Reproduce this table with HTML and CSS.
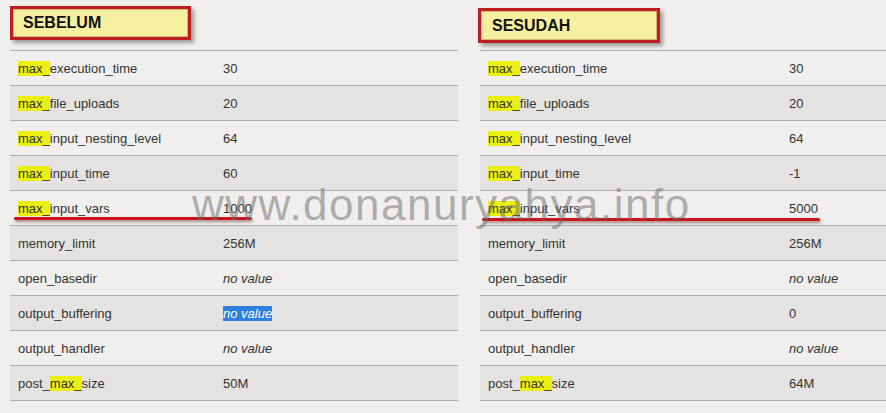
FILE: index.html
```html
<!DOCTYPE html>
<html>
<head>
<meta charset="utf-8">
<link rel="stylesheet" href="styles.css">
</head>
<body>
<div class="page">
  <section class="panel panel-left">
    <div class="head head-left"><div class="label label-left">SEBELUM</div></div>
    <div class="table">
      <div class="row"><span class="k"><span class="hl">max_</span>execution_time</span><span class="v">30</span></div>
      <div class="row alt"><span class="k"><span class="hl">max_</span>file_uploads</span><span class="v">20</span></div>
      <div class="row"><span class="k"><span class="hl">max_</span>input_nesting_level</span><span class="v">64</span></div>
      <div class="row alt"><span class="k"><span class="hl">max_</span>input_time</span><span class="v">60</span></div>
      <div class="row"><span class="k"><span class="hl">max_</span>input_vars</span><span class="v">1000</span><span class="mark mark-left"></span></div>
      <div class="row alt"><span class="k">memory_limit</span><span class="v">256M</span></div>
      <div class="row"><span class="k">open_basedir</span><span class="v"><i>no value</i></span></div>
      <div class="row alt"><span class="k">output_buffering</span><span class="v"><i class="sel">no value</i></span></div>
      <div class="row"><span class="k">output_handler</span><span class="v"><i>no value</i></span></div>
      <div class="row alt last"><span class="k">post_<span class="hl">max_</span>size</span><span class="v">50M</span></div>
    </div>
  </section>
  <section class="panel panel-right">
    <div class="head head-right"><div class="label label-right">SESUDAH</div></div>
    <div class="table">
      <div class="row"><span class="k"><span class="hl">max_</span>execution_time</span><span class="v">30</span></div>
      <div class="row alt"><span class="k"><span class="hl">max_</span>file_uploads</span><span class="v">20</span></div>
      <div class="row"><span class="k"><span class="hl">max_</span>input_nesting_level</span><span class="v">64</span></div>
      <div class="row alt"><span class="k"><span class="hl">max_</span>input_time</span><span class="v">-1</span></div>
      <div class="row"><span class="k"><span class="hl">max_</span>input_vars</span><span class="v">5000</span><span class="mark mark-right"></span></div>
      <div class="row alt"><span class="k">memory_limit</span><span class="v">256M</span></div>
      <div class="row"><span class="k">open_basedir</span><span class="v"><i>no value</i></span></div>
      <div class="row alt"><span class="k">output_buffering</span><span class="v">0</span></div>
      <div class="row"><span class="k">output_handler</span><span class="v"><i>no value</i></span></div>
      <div class="row alt last"><span class="k">post_<span class="hl">max_</span>size</span><span class="v">64M</span></div>
    </div>
  </section>
  <div class="watermark">www.donanuryahya.info</div>
</div>
</body>
</html>
```

FILE: styles.css
```css
html, body {
  margin: 0;
  padding: 0;
  background: #f0efee;
}
body {
  font-family: "Liberation Sans", Arial, sans-serif;
  color: #333;
  overflow: hidden;
}
.page {
  position: relative;
  display: flex;
  gap: 22px;
  padding-left: 10px;
  width: 886px;
  height: 413px;
  box-sizing: border-box;
}
.panel-left { width: 448px; flex: none; }
.panel-right { width: 410px; flex: none; }
.head {
  height: 50px;
  box-sizing: border-box;
}
.head-left { padding-top: 6px; }
.head-right { padding-top: 8px; }
.label {
  box-sizing: border-box;
  height: 34px;
  border: 3px solid #be1d24;
  background: #f5f0a0;
  color: #111;
  font-weight: bold;
  font-size: 16px;
  display: flex;
  align-items: center;
  box-shadow: 3px 3px 4px rgba(0,0,0,0.35), inset 0 0 0 1px rgba(120,0,0,0.25);
}
.label-left {
  width: 181px;
  padding-left: 10px;
}
.label-right {
  width: 182px;
  height: 35px;
  margin-left: -2px;
  padding-left: 11px;
}
.row {
  position: relative;
  display: grid;
  height: 35px;
  box-sizing: border-box;
  align-items: center;
  padding-left: 8px;
  padding-top: 1px;
  border-top: 1px solid #adadad;
  font-size: 13px;
}
.panel-left .row { grid-template-columns: 205px 1fr; }
.panel-right .row { grid-template-columns: 301px 1fr; }
.row.alt { background: #e5e3e1; }
.row.last { border-bottom: 1px solid #adadad; height: 36px; }
.hl { background: #ecef12; }
.v i { font-style: italic; }
.sel { background: #2f80de; color: #fff; }
.mark {
  position: absolute;
  height: 3px;
  background: #c8151b;
  border-radius: 2px;
  box-shadow: 1px 2px 3px rgba(60,0,0,0.45);
}
.mark-left { left: 4px; width: 238px; top: 26px; }
.mark-right { left: 2px; width: 338px; top: 27px; }
.watermark {
  position: absolute;
  left: 192px;
  top: 180px;
  font-size: 44px;
  letter-spacing: 1.5px;
  color: rgba(105,105,105,0.5);
  white-space: nowrap;
  pointer-events: none;
}
```
